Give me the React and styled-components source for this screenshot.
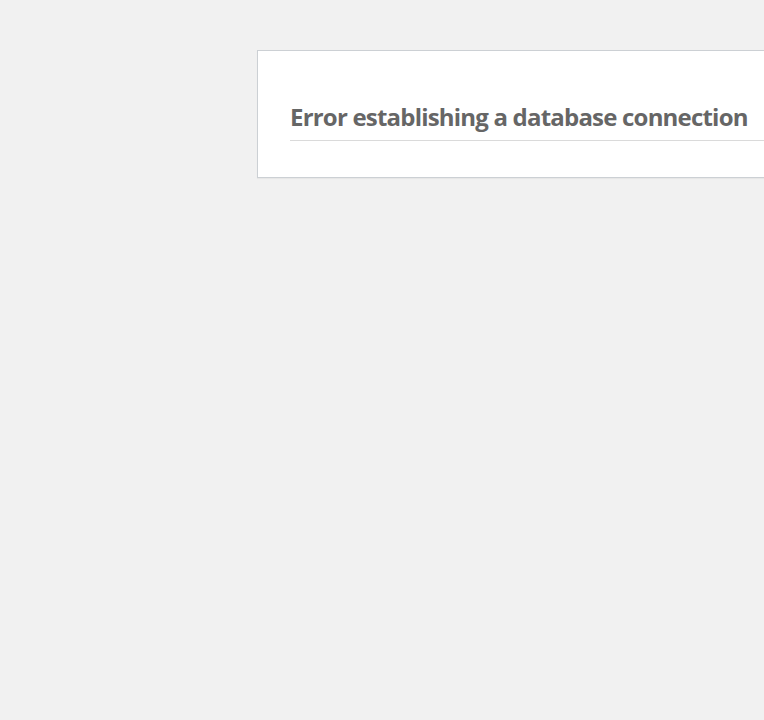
import React from "react";
import styled, { createGlobalStyle } from "styled-components";

const GlobalStyle = createGlobalStyle`
  html {
    background: #f1f1f1;
  }
  body {
    margin: 0;
    overflow: hidden;
    min-height: 720px;
    background: #f1f1f1;
  }
`;

const Page = styled.div`
  overflow: hidden;
  height: 720px;
  padding-top: 50px;
  padding-left: 257px;
  box-sizing: border-box;
`;

const ErrorBox = styled.div`
  background: #fff;
  border: 1px solid #ccd0d4;
  box-shadow: 0 1px 1px rgba(0, 0, 0, 0.04);
  color: #444;
  font-family: "Open Sans", "Noto Sans", sans-serif;
  width: 700px;
  padding: 16px 32px;
`;

const Message = styled.div`
  margin: 30px 0 20px;
`;

const Title = styled.h1`
  margin: 0;
  padding: 2px 0 5px;
  border-bottom: 1px solid #dadada;
  color: #666;
  font-size: 24px;
  font-weight: 700;
  line-height: 36px;
  letter-spacing: -0.8px;
`;

export default function App() {
  return (
    <>
      <GlobalStyle />
      <Page>
        <ErrorBox>
          <Message>
            <Title>Error establishing a database connection</Title>
          </Message>
        </ErrorBox>
      </Page>
    </>
  );
}
